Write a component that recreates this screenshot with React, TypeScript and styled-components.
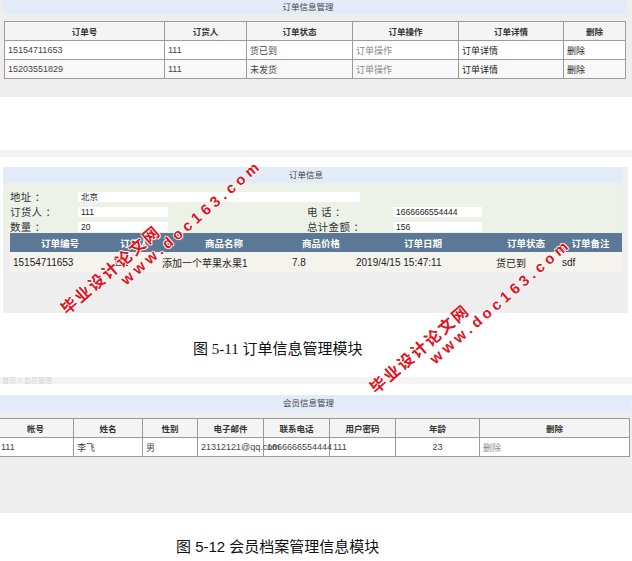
import React from 'react';
import styled, { createGlobalStyle } from 'styled-components';

const GlobalStyle = createGlobalStyle`
  html, body {
    margin: 0;
    padding: 0;
    background: #fff;
  }
  body {
    font-family: "Liberation Sans", "Noto Sans CJK SC", sans-serif;
    color: #333;
  }
`;

const Page = styled.div`
  position: relative;
  width: 632px;
  height: 561px;
  overflow: hidden;
  display: flex;
  flex-direction: column;
`;

const Panel = styled.section<{ $gap: number; $left: number; $width: number; $height: number }>`
  margin: ${p => p.$gap}px 0 0 ${p => p.$left}px;
  width: ${p => p.$width}px;
  height: ${p => p.$height}px;
  flex-shrink: 0;
  background: #eeeeee;
  display: flex;
  flex-direction: column;
`;

const TitleBar = styled.div<{ $inset: number; $width: number; $height: number }>`
  margin-left: ${p => p.$inset}px;
  width: ${p => p.$width}px;
  height: ${p => p.$height}px;
  line-height: ${p => p.$height}px;
  box-sizing: border-box;
  padding-right: 14px;
  background: #e3eaf8;
  color: #444;
  font-size: 8.5px;
  text-align: center;
`;

const Strip = styled.div<{ $gap: number; $height: number }>`
  margin-top: ${p => p.$gap}px;
  height: ${p => p.$height}px;
  flex-shrink: 0;
  background: #f3f3f3;
  color: #d6d6d6;
  font-size: 7px;
  line-height: ${p => p.$height}px;
  padding-left: 2px;
  overflow: hidden;
`;

const Caption = styled.p<{ $gap: number; $left: number; $serifDigits?: boolean }>`
  margin: ${p => p.$gap}px 0 0;
  padding-left: ${p => p.$left}px;
  height: 17px;
  line-height: 17px;
  flex-shrink: 0;
  font-family: ${p => (p.$serifDigits ? '"Liberation Serif"' : '"Liberation Sans"')}, "Noto Sans CJK SC", sans-serif;
  font-size: 15px;
  color: #111;
  white-space: nowrap;
`;

/* grey bordered grids (order list, member list) */

const BorderGrid = styled.table<{ $top: number; $left: number; $width: number }>`
  margin: ${p => p.$top}px 0 0 ${p => p.$left}px;
  width: ${p => p.$width}px;
  border-collapse: collapse;
  table-layout: fixed;
  font-size: 9px;
  color: #444;

  th, td {
    border: 1px solid #9b9b9b;
    height: 19px;
    box-sizing: border-box;
    padding: 0 3px;
    white-space: nowrap;
    overflow: visible;
  }
  th {
    background: #f4f4f4;
    font-size: 8.5px;
    font-weight: 700;
    color: #333;
    text-align: center;
  }
  td {
    background: #fff;
    text-align: left;
  }
`;

const GridRow = styled.tr<{ $shade?: boolean }>`
  td {
    background: ${p => (p.$shade ? '#f8f8f8' : '#fff')};
  }
`;

const GridCell = styled.td<{ $tone?: 'muted' | 'strong' | 'plain'; $center?: boolean }>`
  && {
    color: ${p => (p.$tone === 'muted' ? '#8a8a8a' : p.$tone === 'strong' ? '#1e1e1e' : '#444')};
    text-align: ${p => (p.$center ? 'center' : 'left')};
  }
`;

/* order info form */

const OrderForm = styled.div`
  width: 620px;
  height: 50px;
  box-sizing: border-box;
  padding: 6px 0 0 7px;
  background: #edf2e8;
  display: grid;
  grid-template-columns: 68px 229px 86px 1fr;
  grid-auto-rows: 15px;
  align-items: center;
  font-size: 10.5px;
  color: #333;
`;

const FieldLabel = styled.span`
  white-space: nowrap;
  letter-spacing: 0.3px;
`;

const FieldBox = styled.div<{ $width: number; $span?: number }>`
  width: ${p => p.$width}px;
  height: 10px;
  line-height: 10px;
  padding-left: 3px;
  box-sizing: border-box;
  background: #fff;
  font-size: 8.5px;
  color: #222;
  ${p => (p.$span ? `grid-column: span ${p.$span};` : '')}
`;

const ItemGrid = styled.table`
  margin-left: 7px;
  width: 612px;
  border-collapse: collapse;
  table-layout: fixed;

  th {
    height: 19px;
    padding: 0;
    background: #5b7897;
    color: #fff;
    font-size: 9.5px;
    font-weight: 700;
    text-align: center;
    white-space: nowrap;
  }
  td {
    height: 20px;
    padding: 0 3px;
    background: #f4f3ee;
    color: #222;
    font-size: 10px;
    text-align: left;
    white-space: nowrap;
  }
`;

/* watermark stamped over the page */

const Watermark = styled.div<{ $x: number; $y: number; $size: number; $spacing: number }>`
  position: absolute;
  left: ${p => p.$x}px;
  top: ${p => p.$y}px;
  transform: translate(-50%, -50%) rotate(-41deg);
  font-family: "Liberation Sans", "Noto Sans CJK SC", sans-serif;
  font-size: ${p => p.$size}px;
  font-weight: 700;
  letter-spacing: ${p => p.$spacing}px;
  color: #e2121c;
  white-space: nowrap;
  text-shadow: 1px 0 0 #fff, -1px 0 0 #fff, 0 1px 0 #fff, 0 -1px 0 #fff;
  pointer-events: none;
`;

const orders = [
  { id: '15154711653', buyer: '111', status: '货已到' },
  { id: '15203551829', buyer: '111', status: '未发货' },
];

const marks = [
  { dx: 0, dy: 0 },
  { dx: 309, dy: 79 },
];

const App = () => {
	return (
		<Page>
			<GlobalStyle />

			<Panel $gap={0} $left={0} $width={632} $height={97}>
				<TitleBar $inset={3} $width={624} $height={14}>订单信息管理</TitleBar>
				<BorderGrid $top={7} $left={4} $width={621}>
					<colgroup>
						<col style={{ width: 160 }} />
						<col style={{ width: 82 }} />
						<col style={{ width: 106 }} />
						<col style={{ width: 106 }} />
						<col style={{ width: 105 }} />
						<col style={{ width: 62 }} />
					</colgroup>
					<thead>
						<tr>
							<th>订单号</th>
							<th>订货人</th>
							<th>订单状态</th>
							<th>订单操作</th>
							<th>订单详情</th>
							<th>删除</th>
						</tr>
					</thead>
					<tbody>
						{orders.map((o, i) => (
							<GridRow key={o.id} $shade={i === 1}>
								<GridCell>{o.id}</GridCell>
								<GridCell>{o.buyer}</GridCell>
								<GridCell>{o.status}</GridCell>
								<GridCell $tone="muted">订单操作</GridCell>
								<GridCell $tone="strong">订单详情</GridCell>
								<GridCell $tone="strong">删除</GridCell>
							</GridRow>
						))}
					</tbody>
				</BorderGrid>
			</Panel>

			<Strip $gap={53} $height={7} />

			<Panel $gap={10} $left={3} $width={625} $height={146}>
				<TitleBar $inset={0} $width={620} $height={16}>订单信息</TitleBar>
				<OrderForm>
					<FieldLabel>地址 ：</FieldLabel>
					<FieldBox $width={282} $span={3}>北京</FieldBox>
					<FieldLabel>订货人 ：</FieldLabel>
					<FieldBox $width={90}>111</FieldBox>
					<FieldLabel>电 话 ：</FieldLabel>
					<FieldBox $width={89}>1666666554444</FieldBox>
					<FieldLabel>数量 ：</FieldLabel>
					<FieldBox $width={90}>20</FieldBox>
					<FieldLabel>总计金额 ：</FieldLabel>
					<FieldBox $width={89}>156</FieldBox>
				</OrderForm>
				<ItemGrid>
					<colgroup>
						<col style={{ width: 100 }} />
						<col style={{ width: 49 }} />
						<col style={{ width: 130 }} />
						<col style={{ width: 64 }} />
						<col style={{ width: 140 }} />
						<col style={{ width: 66 }} />
						<col style={{ width: 63 }} />
					</colgroup>
					<thead>
						<tr>
							<th>订单编号</th>
							<th>订货人</th>
							<th>商品名称</th>
							<th>商品价格</th>
							<th>订单日期</th>
							<th>订单状态</th>
							<th>订单备注</th>
						</tr>
					</thead>
					<tbody>
						<tr>
							<td>15154711653</td>
							<td>111</td>
							<td>添加一个苹果水果1</td>
							<td>7.8</td>
							<td>2019/4/15 15:47:11</td>
							<td>货已到</td>
							<td>sdf</td>
						</tr>
					</tbody>
				</ItemGrid>
			</Panel>

			<Caption $gap={28} $left={193} $serifDigits>图 5-11 订单信息管理模块</Caption>

			<Strip $gap={19} $height={7}>首页 &gt; 会员管理</Strip>

			<Panel $gap={11} $left={0} $width={632} $height={118}>
				<TitleBar $inset={0} $width={631} $height={17}>会员信息管理</TitleBar>
				<BorderGrid $top={6} $left={-3} $width={632}>
					<colgroup>
						<col style={{ width: 76 }} />
						<col style={{ width: 69 }} />
						<col style={{ width: 55 }} />
						<col style={{ width: 66 }} />
						<col style={{ width: 66 }} />
						<col style={{ width: 66 }} />
						<col style={{ width: 84 }} />
						<col style={{ width: 150 }} />
					</colgroup>
					<thead>
						<tr>
							<th>帐号</th>
							<th>姓名</th>
							<th>性别</th>
							<th>电子邮件</th>
							<th>联系电话</th>
							<th>用户密码</th>
							<th>年龄</th>
							<th>删除</th>
						</tr>
					</thead>
					<tbody>
						<GridRow>
							<GridCell>111</GridCell>
							<GridCell>李飞</GridCell>
							<GridCell>男</GridCell>
							<GridCell>21312121@qq.com</GridCell>
							<GridCell>1666666554444</GridCell>
							<GridCell>111</GridCell>
							<GridCell $center>23</GridCell>
							<GridCell $tone="muted">删除</GridCell>
						</GridRow>
					</tbody>
				</BorderGrid>
			</Panel>

			<Caption $gap={25} $left={176}>图 5-12 会员档案管理信息模块</Caption>

			{marks.map((m, i) => (
				<React.Fragment key={i}>
					<Watermark $x={110 + m.dx} $y={269 + m.dy} $size={16} $spacing={2}>毕业设计论文网</Watermark>
					<Watermark $x={191 + m.dx} $y={222 + m.dy} $size={15} $spacing={4}>www.doc163.com</Watermark>
				</React.Fragment>
			))}
		</Page>
	);
};

export default App;
